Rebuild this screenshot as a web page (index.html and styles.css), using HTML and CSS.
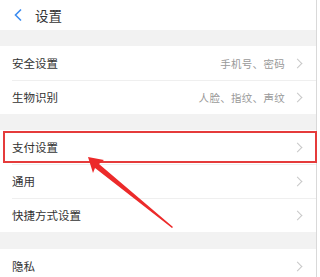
FILE: index.html
```html
<!DOCTYPE html>
<html>
<head>
<meta charset="utf-8">
<link rel="stylesheet" href="styles.css">
</head>
<body>
<div class="page">
  <div class="header">
    <svg class="back" width="10" height="14" viewBox="0 0 10 14"><path d="M8 1.5 L2.5 7 L8 12.5" fill="none" stroke="#3b8cf0" stroke-width="1.6"/></svg>
    <span class="title">设置</span>
  </div>
  <div class="gap"></div>
  <div class="group">
    <div class="row"><span class="label">安全设置</span><span class="value">手机号、密码</span><span class="chev"></span></div>
    <div class="row"><span class="label">生物识别</span><span class="value">人脸、指纹、声纹</span><span class="chev"></span></div>
  </div>
  <div class="gap"></div>
  <div class="group">
    <div class="row"><span class="label">支付设置</span><span class="value"></span><span class="chev"></span></div>
    <div class="row"><span class="label">通用</span><span class="value"></span><span class="chev"></span></div>
    <div class="row"><span class="label">快捷方式设置</span><span class="value"></span><span class="chev"></span></div>
  </div>
  <div class="gap gap-last"></div>
  <div class="group">
    <div class="row"><span class="label">隐私</span><span class="value"></span><span class="chev"></span></div>
  </div>
  <div class="highlight"></div>
  <svg class="arrow" width="320" height="277" viewBox="0 0 320 277">
    <polygon points="88,157 104,160 99,164 173,227 172,228 95,168 93,173" fill="#ec2a2a"/>
  </svg>
</div>
</body>
</html>
```
FILE: styles.css
```css
html, body {
  margin: 0;
  padding: 0;
  background: #fff;
}
body {
  width: 320px;
  height: 277px;
  overflow: hidden;
  font-family: "Noto Sans CJK SC", "Noto Sans", sans-serif;
}
.page {
  position: relative;
  width: 316px;
  height: 277px;
  border-right: 1px solid #d9d9d9;
  background: #fff;
}
.header {
  height: 30px;
  display: flex;
  align-items: center;
  padding-left: 13px;
}
.back {
  display: block;
  margin-right: 12px;
}
.title {
  font-size: 13.5px;
  color: #333;
  line-height: 30px;
}
.gap {
  height: 16px;
  background: #f2f2f2;
}
.gap-last {
  height: 17px;
}
.group {
  background: #fff;
}
.row {
  height: 34px;
  display: flex;
  align-items: center;
  padding: 0 10px 0 12px;
  position: relative;
}
.row + .row::before {
  content: "";
  position: absolute;
  left: 12px;
  right: 0;
  top: 0;
  height: 1px;
  background: #efefef;
}
.label {
  font-size: 11.5px;
  color: #333;
  flex: 1;
}
.value {
  font-size: 10.5px;
  letter-spacing: 0.3px;
  color: #999;
  margin-right: 9px;
}
.chev {
  width: 6px;
  height: 6px;
  border-top: 1px solid #c8c8c8;
  border-right: 1px solid #c8c8c8;
  transform: rotate(45deg);
  margin-right: 5px;
}
.highlight {
  position: absolute;
  left: 3px;
  top: 131px;
  width: 310px;
  height: 28px;
  border: 2px solid #e53b3b;
}
.arrow {
  position: absolute;
  left: 0;
  top: 0;
}
```
